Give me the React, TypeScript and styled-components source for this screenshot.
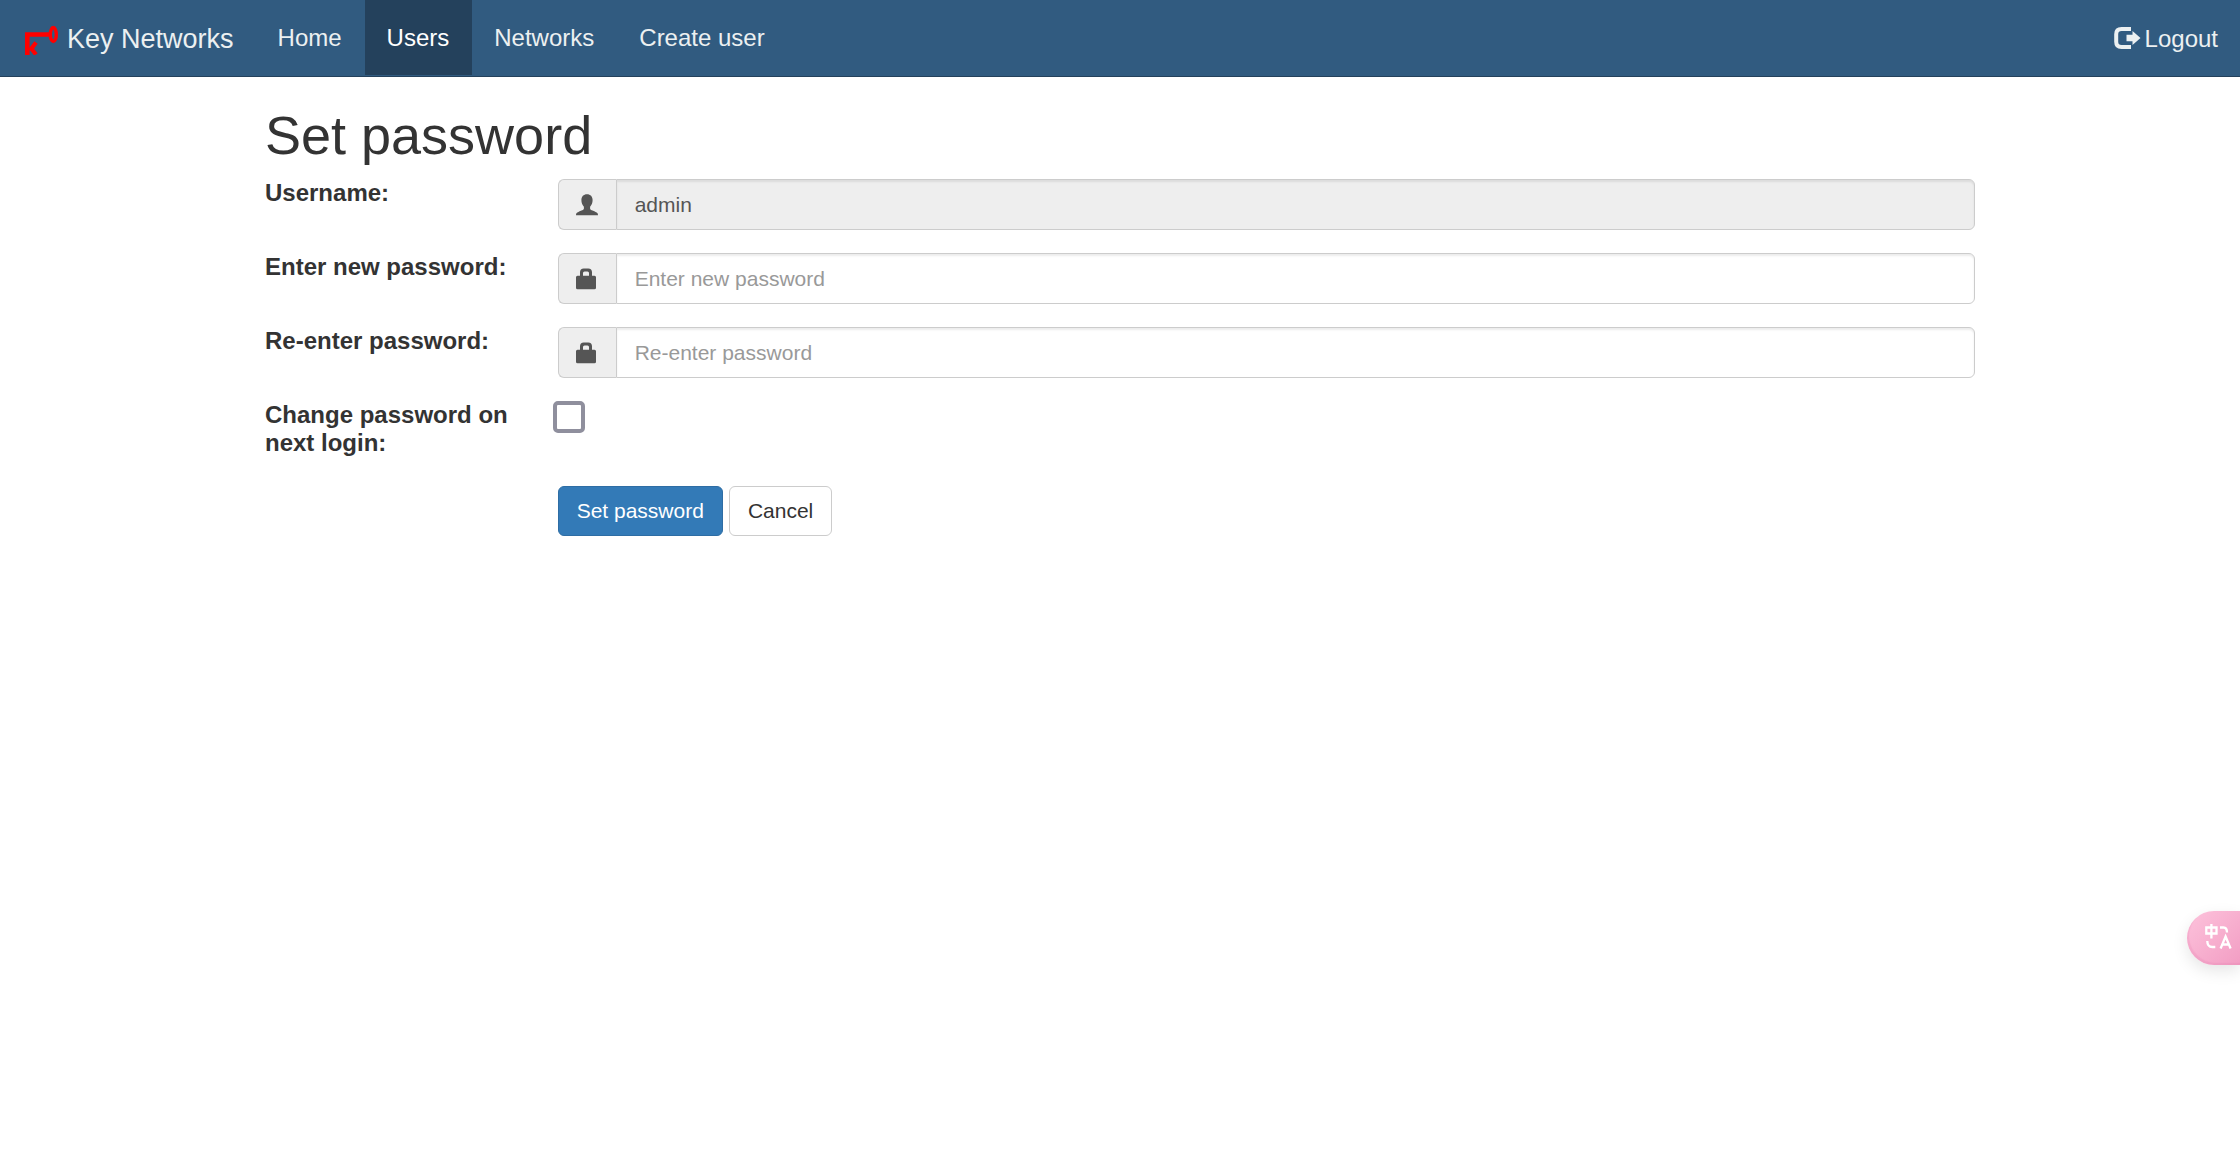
import React from "react";
import styled, { createGlobalStyle, css } from "styled-components";

const GlobalStyle = createGlobalStyle`
  *, *::before, *::after { box-sizing: border-box; }
  body {
    margin: 0;
    background: #fff;
    color: #333;
    font-family: "Liberation Sans", Arial, Helvetica, sans-serif;
    font-size: 21px;
    line-height: 30px;
  }
`;

const Navbar = styled.nav`
  display: flex;
  min-height: 77px;
  background: #315b80;
  border-bottom: 1px solid #24415c;
`;

const navText = css`
  display: flex;
  align-items: center;
  color: #ecf0f1;
  text-decoration: none;
  font-size: 24px;
`;

const Brand = styled.a`
  ${navText}
  padding: 2px 22px 0;
  gap: 8px;
  font-size: 27px;
`;

const NavList = styled.ul`
  display: flex;
  flex: 1;
  align-items: flex-start;
  margin: 0;
  padding: 0;
  list-style: none;
`;

const NavLink = styled.a<{ $active?: boolean }>`
  ${navText}
  height: 75px;
  padding: 0 23px 0 22px;
  ${(p) => p.$active && "background: #24415c; color: #fff;"}
`;

const Logout = styled.a`
  ${navText}
  gap: 4px;
  padding: 2px 22px 0;
`;

const Container = styled.main`
  max-width: 1756px;
  margin: 0 auto;
  padding: 29px 23px;
`;

const Title = styled.h1`
  margin: 0 0 14px;
  font-size: 54px;
  font-weight: 400;
  line-height: 59px;
`;

const Form = styled.form`
  display: flex;
  flex-direction: column;
  gap: 23px;
  margin: 0 -23px;
`;

const Row = styled.div`
  display: grid;
  grid-template-columns: 1fr 5fr;
`;

const Label = styled.label`
  padding: 0 23px;
  font-size: 24px;
  font-weight: 700;
  line-height: 28px;
`;

const Field = styled.div`
  display: flex;
  padding: 0 23px;
`;

const Addon = styled.span`
  display: flex;
  align-items: center;
  justify-content: center;
  width: 58px;
  color: #555;
  background: #eee;
  border: 1px solid #ccc;
  border-right: 0;
  border-radius: 6px 0 0 6px;
`;

const TextInput = styled.input`
  flex: 1;
  min-width: 0;
  height: 51px;
  padding: 0 18px;
  color: #555;
  background: #fff;
  border: 1px solid #ccc;
  border-radius: 0 6px 6px 0;
  box-shadow: inset 0 2px 2px rgba(0, 0, 0, 0.075);
  font: inherit;
  outline: none;
  &::placeholder { color: #999; opacity: 1; }
  &:disabled { background: #eee; opacity: 1; }
`;

const Checkbox = styled.input`
  appearance: none;
  width: 32px;
  height: 32px;
  margin: 0 -5px;
  background: #fff;
  border: 4px solid #8f8f9d;
  border-radius: 5px;
  &:checked { background: #337ab7; }
`;

const Actions = styled(Field)`
  grid-column: 2;
  gap: 6px;
  padding-top: 6px;
`;

const Button = styled.button<{ $primary?: boolean }>`
  height: 50px;
  padding: 0 18px;
  color: ${(p) => (p.$primary ? "#fff" : "#333")};
  background: ${(p) => (p.$primary ? "#337ab7" : "#fff")};
  border: 1px solid ${(p) => (p.$primary ? "#2e6da4" : "#ccc")};
  border-radius: 6px;
  font: inherit;
  cursor: pointer;
`;

const TranslateTab = styled.button`
  position: fixed;
  top: 911px;
  right: 0;
  display: flex;
  align-items: center;
  width: 53px;
  height: 54px;
  padding: 0 0 0 17px;
  color: #fff;
  background: linear-gradient(135deg, #fdc3dc 0%, #f29dc3 100%);
  border: 0;
  border-radius: 27px 0 0 27px;
  box-shadow: 0 6px 16px rgba(0, 0, 0, 0.1), inset 2px -2px 1px rgba(225, 120, 170, 0.2);
  cursor: pointer;
`;

const KeyLogo = () => (
  <svg width="37" height="32" viewBox="0 0 37 32" fill="none" stroke="#f00" aria-hidden="true">
    <path d="M27 11.500H5.300V32" strokeWidth="4.600" />
    <ellipse cx="31.300" cy="11.500" rx="3" ry="7" strokeWidth="3.400" />
    <path d="M14 19.500L8 27.500M8.500 24.500L14 31.500" strokeWidth="4.200" />
  </svg>
);

const LogoutIcon = () => (
  <svg width="27" height="24" viewBox="0 0 27 24" aria-hidden="true">
    <path d="M17 2H7.500Q2.200 2 2.200 7.300v7.400q0 5.300 5.300 5.300H17" fill="none" stroke="currentColor" strokeWidth="4" />
    <path d="M12.500 7.700h6V4l8 7-8 7v-3.700h-6z" fill="currentColor" />
  </svg>
);

const UserIcon = () => (
  <svg width="22" height="22" viewBox="0 0 22 22" fill="currentColor" aria-hidden="true">
    <path d="M11 .3C7.500.3 5.400 2.600 5.400 6c0 2.600.9 5.100 2.500 6.700v1.700c0 .9-.6 1.300-1.700 1.800-1.800.8-3.600 1.400-4.900 2.300C.4 19.100 0 19.900 0 21.300h22c0-1.400-.4-2.200-1.300-2.800-1.300-.9-3.100-1.500-4.900-2.300-1.100-.5-1.700-.9-1.700-1.800v-1.700c1.600-1.600 2.500-4.100 2.500-6.700C16.600 2.600 14.500.3 11 .3z" />
  </svg>
);

const LockIcon = () => (
  <svg width="22" height="22" viewBox="0 0 22 22" fill="currentColor" aria-hidden="true">
    <path d="M1.500 7.700H4V4.300Q4 .5 7.800.5h4.400Q16 .5 16 4.300v3.400h2.500q1.500 0 1.500 1.500v10.600q0 1.500-1.500 1.500h-17Q0 21.300 0 19.800V9.200q0-1.500 1.500-1.500zM7 7.700h6V5q0-1.500-1.500-1.500h-3Q7 3.500 7 5z" />
  </svg>
);

const TranslateIcon = () => (
  <svg width="28" height="28" viewBox="0 0 28 28" fill="none" stroke="currentColor" strokeWidth="2.300" aria-hidden="true">
    <path d="M2.300 3.500h10.200v6H2.300zM7.400 0v14.500" />
    <path d="M16 3.500h3.500q3.500 0 3.500 5M3.300 17q0 6 5 6h3" />
    <path d="M16.600 24.500l5-12 5 12M18 20.500h7.200" />
  </svg>
);

const links = [
  { text: "Home" },
  { text: "Users", active: true },
  { text: "Networks" },
  { text: "Create user" },
];

export default function App() {
  return (
    <>
      <GlobalStyle />
      <Navbar>
        <Brand href="#"><KeyLogo />Key Networks</Brand>
        <NavList>
          {links.map((l) => (
            <li key={l.text}>
              <NavLink href="#" $active={l.active}>{l.text}</NavLink>
            </li>
          ))}
        </NavList>
        <Logout href="#"><LogoutIcon />Logout</Logout>
      </Navbar>
      <Container>
        <Title>Set password</Title>
        <Form onSubmit={(e) => e.preventDefault()}>
          <Row>
            <Label htmlFor="username">Username:</Label>
            <Field>
              <Addon><UserIcon /></Addon>
              <TextInput id="username" defaultValue="admin" disabled />
            </Field>
          </Row>
          <Row>
            <Label htmlFor="password">Enter new password:</Label>
            <Field>
              <Addon><LockIcon /></Addon>
              <TextInput id="password" type="password" placeholder="Enter new password" />
            </Field>
          </Row>
          <Row>
            <Label htmlFor="confirm">Re-enter password:</Label>
            <Field>
              <Addon><LockIcon /></Addon>
              <TextInput id="confirm" type="password" placeholder="Re-enter password" />
            </Field>
          </Row>
          <Row>
            <Label htmlFor="change">Change password on next login:</Label>
            <Field>
              <Checkbox id="change" type="checkbox" />
            </Field>
          </Row>
          <Row>
            <Actions>
              <Button type="submit" $primary>Set password</Button>
              <Button type="button">Cancel</Button>
            </Actions>
          </Row>
        </Form>
      </Container>
      <TranslateTab type="button" aria-label="Translate"><TranslateIcon /></TranslateTab>
    </>
  );
}
